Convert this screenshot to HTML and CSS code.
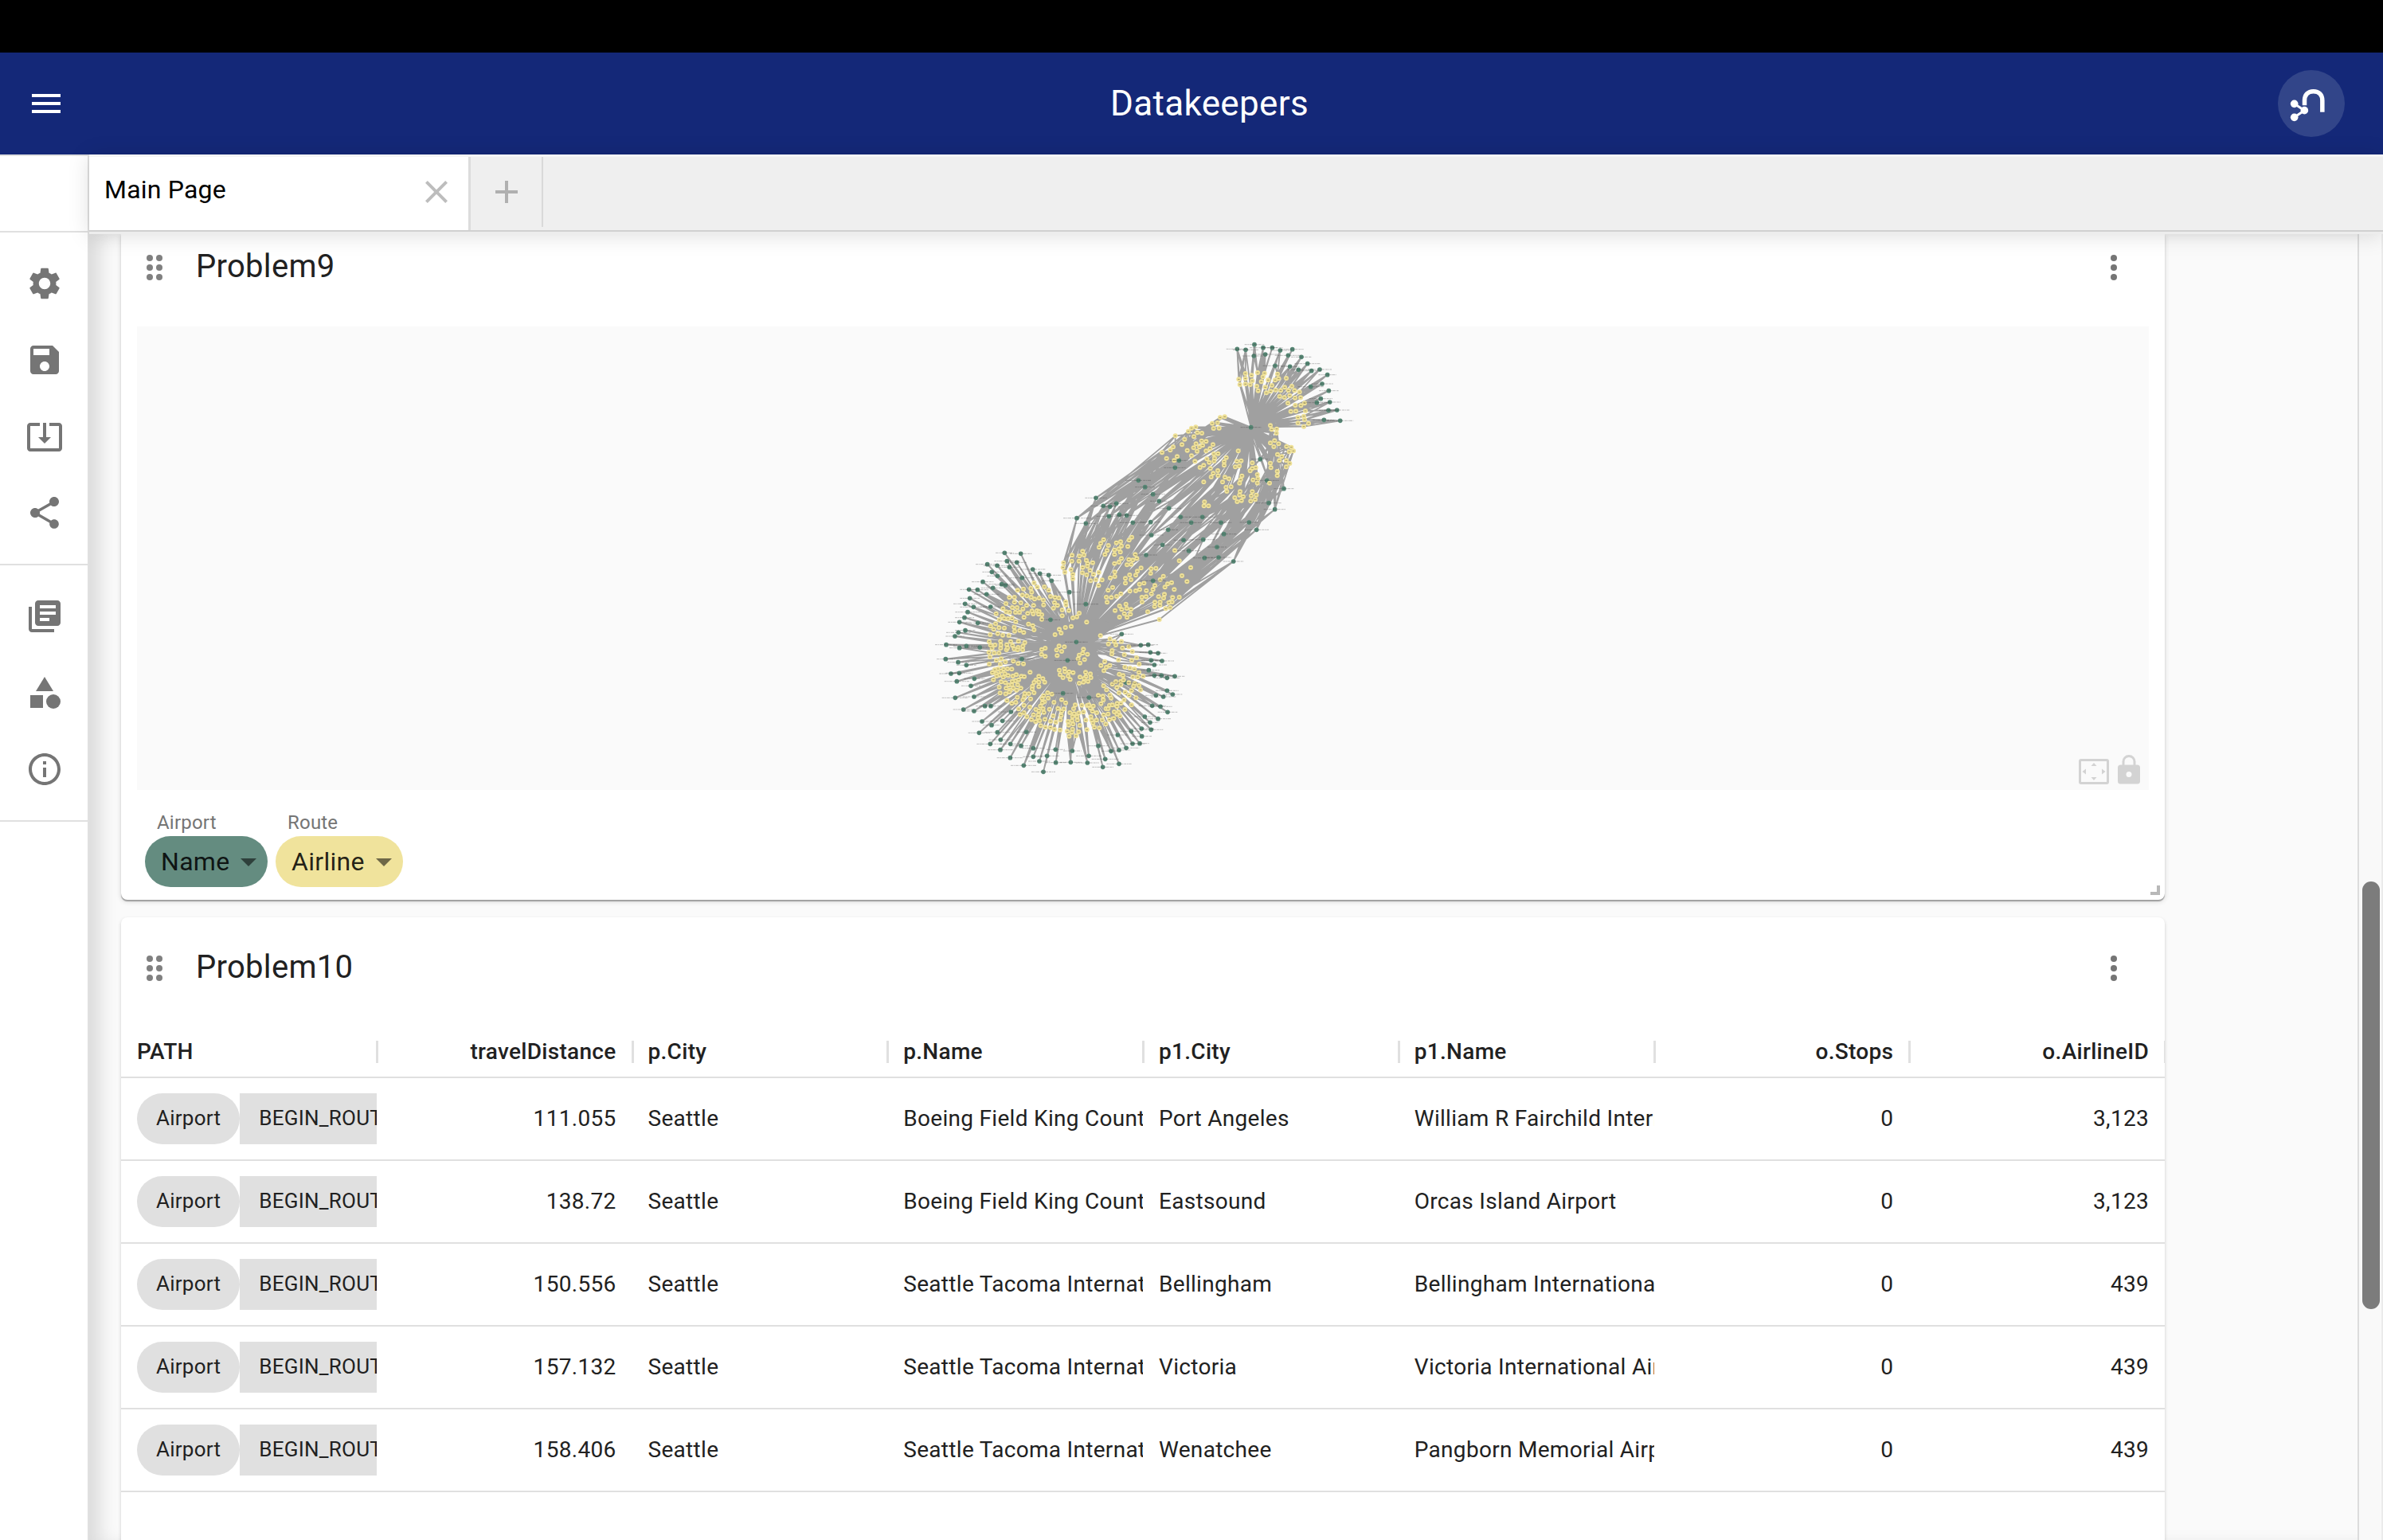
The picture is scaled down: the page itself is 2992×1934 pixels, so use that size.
FILE: index.html
```html
<!DOCTYPE html>
<html lang="en">
<head>
<meta charset="utf-8">
<title>Datakeepers</title>
<link rel="stylesheet" href="styles.css">
</head>
<body>
<div class="app">
  <div class="bezel"></div>
  <header class="topbar">
    <svg class="icon menu" viewBox="0 0 24 24"><path d="M3 18h18v-2H3v2zm0-5h18v-2H3v2zm0-7v2h18V6H3z"/></svg>
    <h1 class="brand">Datakeepers</h1>
    <div class="avatar">
      <svg viewBox="1080 114 252 252"><g fill="none" stroke="#fff"><path stroke-width="16.5" d="M1180.500 247V229c0-22 13-35 33.500-35s33.500 13 33.500 35v43"/><path stroke-width="9" d="M1142 241l38 25l-38 26"/></g><g fill="#fff"><circle cx="1142" cy="241" r="14.500"/><circle cx="1180" cy="266" r="14.500"/><circle cx="1142" cy="292" r="14.500"/></g></svg>
    </div>
  </header>
  <div class="body">
    <nav class="drawer">
      <div class="drawer-head"></div>
      <div class="group">
        <div class="item"><svg class="icon" viewBox="0 0 24 24"><path d="M19.140 12.940c.04-.3.06-.61.06-.94 0-.32-.02-.64-.07-.94l2.030-1.580c.18-.14.23-.41.12-.61l-1.920-3.320c-.12-.22-.37-.29-.59-.22l-2.390.96c-.5-.38-1.030-.7-1.620-.94l-.36-2.540c-.04-.24-.24-.41-.48-.41h-3.840c-.24 0-.43.17-.47.41l-.36 2.540c-.59.24-1.130.57-1.620.94l-2.390-.96c-.22-.08-.47 0-.59.22L2.740 8.870c-.12.21-.08.47.12.61l2.030 1.580c-.05.3-.09.63-.09.94s.02.64.07.94l-2.030 1.580c-.18.14-.23.41-.12.61l1.920 3.320c.12.22.37.29.59.22l2.390-.96c.5.38 1.030.7 1.620.94l.36 2.540c.05.24.24.41.48.41h3.840c.24 0 .44-.17.47-.41l.36-2.540c.59-.24 1.130-.56 1.620-.94l2.390.96c.22.08.47 0 .59-.22l1.920-3.320c.12-.22.07-.47-.12-.61l-2.010-1.580zM12 15.600c-1.980 0-3.600-1.620-3.600-3.600s1.620-3.600 3.600-3.600 3.600 1.620 3.600 3.600-1.620 3.600-3.600 3.600z"/></svg></div>
        <div class="item"><svg class="icon" viewBox="0 0 24 24"><path d="M17 3H5c-1.110 0-2 .9-2 2v14c0 1.100.89 2 2 2h14c1.100 0 2-.9 2-2V7l-4-4zm-5 16c-1.660 0-3-1.340-3-3s1.340-3 3-3 3 1.340 3 3-1.340 3-3 3zm3-10H5V5h10v4z"/></svg></div>
        <div class="item"><svg class="icon" viewBox="0 0 24 24"><path d="M12 16.500l4-4h-3v-9h-2v9H8l4 4zm9-13h-6v1.990h6v14.030H3V5.490h6V3.500H3c-1.100 0-2 .9-2 2v14c0 1.100.9 2 2 2h18c1.100 0 2-.9 2-2v-14c0-1.100-.9-2-2-2z"/></svg></div>
        <div class="item"><svg class="icon" viewBox="0 0 24 24"><path d="M18 16.080c-.76 0-1.440.3-1.960.77L8.910 12.700c.05-.23.09-.46.09-.7s-.04-.47-.09-.7l7.050-4.110c.54.5 1.250.81 2.040.81 1.660 0 3-1.340 3-3s-1.340-3-3-3-3 1.340-3 3c0 .24.04.47.09.7L8.040 9.810C7.500 9.310 6.790 9 6 9c-1.660 0-3 1.340-3 3s1.340 3 3 3c.79 0 1.500-.31 2.040-.81l7.120 4.160c-.05.21-.08.43-.08.65 0 1.610 1.310 2.920 2.920 2.920s2.920-1.310 2.920-2.920-1.310-2.920-2.920-2.920z"/></svg></div>
      </div>
      <div class="group">
        <div class="item"><svg class="icon" viewBox="0 0 24 24"><path d="M4 6H2v14c0 1.100.9 2 2 2h14v-2H4V6zm16-4H8c-1.100 0-2 .9-2 2v12c0 1.100.9 2 2 2h12c1.100 0 2-.9 2-2V4c0-1.100-.9-2-2-2zm-1 5H9V5h10v2zm0 4H9V9h10v2zm-4 4H9v-2h6v2z"/></svg></div>
        <div class="item"><svg class="icon" viewBox="0 0 24 24"><path d="M12 2l-5.500 9h11z"/><circle cx="17.500" cy="17.500" r="4.500"/><path d="M3 13.500h8v8H3z"/></svg></div>
        <div class="item"><svg class="icon" viewBox="0 0 24 24"><path d="M11 7h2v2h-2zm0 4h2v6h-2zm1-9C6.480 2 2 6.480 2 12s4.480 10 10 10 10-4.480 10-10S17.520 2 12 2zm0 18c-4.410 0-8-3.590-8-8s3.590-8 8-8 8 3.590 8 8-3.590 8-8 8z"/></svg></div>
      </div>
    </nav>
    <div class="main">
      <div class="tabs">
        <div class="tab"><span>Main Page</span><svg class="icon close" viewBox="0 0 24 24"><path d="M19 6.410L17.590 5 12 10.590 6.410 5 5 6.410 10.590 12 5 17.590 6.410 19 12 13.410 17.590 19 19 17.590 13.410 12z"/></svg></div>
        <div class="tab-add"><svg class="icon" viewBox="0 0 24 24"><path d="M19 13h-6v6h-2v-6H5v-2h6V5h2v6h6v2z"/></svg></div>
      </div>
      <div class="page">
        <div class="cards">
          <section class="card card-graph">
            <div class="card-head">
              <svg class="grip" viewBox="0 0 20 32"><circle cx="4" cy="4" r="4"/><circle cx="16" cy="4" r="4"/><circle cx="4" cy="16" r="4"/><circle cx="16" cy="16" r="4"/><circle cx="4" cy="28" r="4"/><circle cx="16" cy="28" r="4"/></svg>
              <h2>Problem9</h2>
              <svg class="more" viewBox="0 0 8 32"><circle cx="4" cy="4" r="4"/><circle cx="4" cy="16" r="4"/><circle cx="4" cy="28" r="4"/></svg>
            </div>
            <div class="canvas">
              <svg id="graph" viewBox="-3384 0 7578 1746"></svg>
              <div class="canvas-tools">
                <svg class="fit" viewBox="0 0 38 32"><rect x="1.500" y="1.500" width="35" height="29" rx="1.500" fill="none" stroke="#d3d3d3" stroke-width="3"/><path d="M15.500 9h7L19 5zM15.500 23h7L19 27zM9 12.500v7L4.500 16zM29 12.500v7l4.500-3.500z"/></svg>
                <svg class="lock" viewBox="0 0 28 37"><path fill="none" stroke="#d3d3d3" stroke-width="3" d="M7 14V8.500a7 7 0 0 1 14 0V14"/><path fill-rule="evenodd" d="M3.500 12.500h21A3.500 3.500 0 0 1 28 16v17a3.500 3.500 0 0 1-3.500 3.500h-21A3.500 3.500 0 0 1 0 33V16a3.500 3.500 0 0 1 3.500-3.500zM14 21a3.500 3.500 0 1 0 0 7 3.500 3.500 0 0 0 0-7z"/></svg>
              </div>
            </div>
            <div class="legend">
              <div class="legend-item"><label>Airport</label><div class="pill pill-airport">Name<i class="caret"></i></div></div>
              <div class="legend-item"><label>Route</label><div class="pill pill-route">Airline<i class="caret"></i></div></div>
            </div>
            <i class="resize"></i>
          </section>
          <section class="card card-table">
            <div class="card-head">
              <svg class="grip" viewBox="0 0 20 32"><circle cx="4" cy="4" r="4"/><circle cx="16" cy="4" r="4"/><circle cx="4" cy="16" r="4"/><circle cx="16" cy="16" r="4"/><circle cx="4" cy="28" r="4"/><circle cx="16" cy="28" r="4"/></svg>
              <h2>Problem10</h2>
              <svg class="more" viewBox="0 0 8 32"><circle cx="4" cy="4" r="4"/><circle cx="4" cy="16" r="4"/><circle cx="4" cy="28" r="4"/></svg>
            </div>
            <div class="grid">
              <div class="row head"><div class="cell">PATH</div><div class="cell num">travelDistance</div><div class="cell">p.City</div><div class="cell">p.Name</div><div class="cell">p1.City</div><div class="cell">p1.Name</div><div class="cell num">o.Stops</div><div class="cell num">o.AirlineID</div></div>
              <div class="row"><div class="cell path"><span class="chip">Airport</span><span class="chip rel">BEGIN_ROUTE</span></div><div class="cell num">111.055</div><div class="cell">Seattle</div><div class="cell">Boeing Field King County</div><div class="cell">Port Angeles</div><div class="cell">William R Fairchild International</div><div class="cell num">0</div><div class="cell num">3,123</div></div>
              <div class="row"><div class="cell path"><span class="chip">Airport</span><span class="chip rel">BEGIN_ROUTE</span></div><div class="cell num">138.72</div><div class="cell">Seattle</div><div class="cell">Boeing Field King County</div><div class="cell">Eastsound</div><div class="cell">Orcas Island Airport</div><div class="cell num">0</div><div class="cell num">3,123</div></div>
              <div class="row"><div class="cell path"><span class="chip">Airport</span><span class="chip rel">BEGIN_ROUTE</span></div><div class="cell num">150.556</div><div class="cell">Seattle</div><div class="cell">Seattle Tacoma International</div><div class="cell">Bellingham</div><div class="cell">Bellingham International</div><div class="cell num">0</div><div class="cell num">439</div></div>
              <div class="row"><div class="cell path"><span class="chip">Airport</span><span class="chip rel">BEGIN_ROUTE</span></div><div class="cell num">157.132</div><div class="cell">Seattle</div><div class="cell">Seattle Tacoma International</div><div class="cell">Victoria</div><div class="cell">Victoria International Airport</div><div class="cell num">0</div><div class="cell num">439</div></div>
              <div class="row"><div class="cell path"><span class="chip">Airport</span><span class="chip rel">BEGIN_ROUTE</span></div><div class="cell num">158.406</div><div class="cell">Seattle</div><div class="cell">Seattle Tacoma International</div><div class="cell">Wenatchee</div><div class="cell">Pangborn Memorial Airport</div><div class="cell num">0</div><div class="cell num">439</div></div>
            </div>
          </section>
        </div>
        <div class="scrollbar"><div class="thumb"></div></div>
      </div>
    </div>
  </div>
</div>
<script src="graph.js"></script>
</body>
</html>
```
FILE: styles.css
```css
* { box-sizing: border-box; }
body { margin: 0; font-family: Roboto, "Liberation Sans", sans-serif; color: #212121; background: #fafafa; }
h1, h2 { margin: 0; font-weight: 400; }
svg { display: block; flex: none; }
.app { width: 2992px; height: 1934px; overflow: hidden; display: flex; flex-direction: column; }
.icon { width: 48px; height: 48px; fill: #757575; }

.bezel { height: 66px; background: #000; flex: none; }
.topbar { height: 128px; flex: none; background: #142878; color: #fff; display: flex; align-items: center; padding: 0 48px 0 34px; }
.menu { fill: #fff; }
.brand { flex: 1; text-align: center; font-size: 44px; line-height: 60px; letter-spacing: .33px; padding-left: 95px; padding-bottom: 1px; }
.avatar { width: 84px; height: 84px; border-radius: 50%; background: #324589; }

.body { flex: 1; min-height: 0; display: flex; }
.drawer { width: 112px; flex: none; background: #fff; border-right: 2px solid #e0e0e0; }
.drawer-head { height: 98px; border-top: 2px solid #e0e0e0; border-bottom: 2px solid #e0e0e0; }
.group { padding: 16px 0; border-bottom: 2px solid #e0e0e0; }
.item { height: 96px; display: flex; align-items: center; justify-content: center; padding-left: 2px; }

.main { flex: 1; min-width: 0; display: flex; flex-direction: column; background: #fafafa; }
.tabs { height: 100px; flex: none; display: flex; background: #efefef; border-top: 3px solid #f5f5f5; border-bottom: 3px solid #ededed; box-shadow: inset 0 -2px #d0d0d0, 0 2px 26px rgba(0,0,0,.13); position: relative; z-index: 1; }
.tab { width: 479px; height: 92px; background: #fff; border-right: 3px solid #dcdcdc; display: flex; align-items: center; justify-content: space-between; padding: 0 16px 4px 19px; font-size: 32px; letter-spacing: .2px; color: #000; }
.tab span { padding-bottom: 6px; }
.tab-add { width: 91px; height: 88px; border-right: 2px solid #d9d9d9; display: flex; align-items: center; justify-content: center; }
.close { fill: #bdbdbd; }
.tab-add .icon { fill: #b0b0b0; }

.page { flex: 1; min-height: 0; display: flex; justify-content: space-between; overflow: hidden; box-shadow: inset 22px 0 22px -8px rgba(0,0,0,.12); }
.cards { width: 2606px; padding-left: 40px; display: flex; flex-direction: column; gap: 22px; }
.card { flex: none; background: #fff; display: flex; flex-direction: column; position: relative; }
.card-graph { height: 836px; border-radius: 0 0 8px 8px; padding: 0 20px; box-shadow: 0 2px 1px #a0a0a0, 0 2px 6px rgba(0,0,0,.16); }
.card-table { height: 860px; border-radius: 8px; box-shadow: 0 2px 4px rgba(0,0,0,.18); }
.card-head { display: flex; align-items: center; height: 128px; flex: none; padding: 0 60px 0 32px; }
.card-graph .card-head { height: 116px; padding: 0 40px 32px 12px; }
.card-head h2 { flex: 1; padding-left: 42px; font-size: 40px; line-height: 54px; letter-spacing: .3px; padding-bottom: 2px; }
.grip { width: 20px; height: 32px; fill: #808080; }
.more { width: 8px; height: 32px; fill: #757575; }

.canvas { height: 582px; flex: none; background: #fafafa; position: relative; }
#graph { width: 2526px; height: 582px; }
.canvas-tools { position: absolute; right: 11px; bottom: 7px; display: flex; align-items: flex-end; gap: 11px; }
.canvas-tools svg { fill: #d3d3d3; }
.fit { width: 38px; height: 32px; }
.lock { width: 28px; height: 37px; }
.legend { display: flex; gap: 10px; padding: 24px 10px 0; }
.legend-item { display: flex; flex-direction: column; }
.legend label { padding-left: 15px; font-size: 24px; line-height: 34px; color: #757575; letter-spacing: .2px; }
.pill { height: 64px; border-radius: 32px; display: flex; align-items: center; justify-content: space-between; padding: 0 14px 1px 20px; font-size: 32px; color: rgba(0,0,0,.87); letter-spacing: .3px; }
.pill-airport { width: 154px; background: #648c80; }
.pill-route { width: 160px; background: #f0e39c; }
.caret { border: 10px solid transparent; border-top-color: rgba(0,0,0,.54); border-bottom: 0; margin-top: 3px; }
.resize { position: absolute; right: 6px; bottom: 6px; width: 12px; height: 12px; border-right: 4px solid #b8b8b8; border-bottom: 4px solid #b8b8b8; }

.grid { padding-top: 8px; }
.row { display: grid; grid-template-columns: repeat(8, 320.75px); height: 104px; border-bottom: 2px solid #e0e0e0; }
.cell { display: flex; align-items: center; padding: 0 20px 2px; overflow: hidden; white-space: nowrap; font-size: 28px; letter-spacing: .3px; }
.path { padding-bottom: 0; }
.num { justify-content: flex-end; }
.head { height: 66px; overflow: hidden; }
.head .cell { font-weight: 500; position: relative; overflow: visible; padding-bottom: 0; }
.head .cell::after { content: ""; position: absolute; right: -2px; top: 19px; width: 3px; height: 28px; background: #e0e0e0; }
.chip { flex: none; height: 64px; border-radius: 32px; padding: 0 24px; background: #e0e0e0; font-size: 26px; line-height: 63px; letter-spacing: .25px; }
.rel { border-radius: 0; }

.scrollbar { width: 32px; border-left: 2px solid #dcdcdc; border-right: 2px solid #ebebeb; background: #f9f9f9; padding: 813px 2px 0 4px; }
.thumb { width: 22px; height: 537px; border-radius: 11px; background: #7c7c7c; }
```
FILE: graph.js
```js
const parse = (s, dx = 0, dy = 0) => s.trim().split(/\s+/).map(p => {
  const [x, y] = p.split(',').map(Number);
  return [x + dx, y + dy];
});

// Node positions, grouped by cluster
const fanAirports = parse(`334,103 395,106 343,134 380,139 269,146 306,151 352,157 440,165 286,175 467,181 500,187 307,190 400,197 511,208 252,212 323,221 337,225 290,235 200,241 232,242 266,259 203,274 185,295 217,307 281,306 195,326 183,347 164,364 233,367 186,395 160,403 147,417 114,449 190,454 164,461 241,459 112,503 159,515 399,503 190,526 132,558 163,556 220,577 154,587 207,604 219,645 148,649 179,693 219,699 260,680 282,680 358,702 249,738 326,736 285,752 238,781 307,779 416,778 319,807 280,823 356,823 318,845 396,830 442,839 355,875 442,871 494,868 526,844 465,888 406,904 527,893 480,928 589,849 583,892 651,868 687,830 646,894 713,880 704,910 765,898 735,850 765,846 792,838 760,789 816,822 843,821 811,775 850,765 851,794 886,769 882,742 862,720 912,728 948,703 921,682 890,679 904,640 932,645 967,636 946,622 946,574 975,568 925,565 898,565 877,545 898,525 886,508 927,510 912,481 883,478 847,451 875,449 775,409 791,592`, -450, 750);
const innerAirports = parse(`578,251 640,296 507,355 604,439 571,508 554,632 652,648`, -450, 750);
const fanRoutes = parse(`445,216 405,239 383,244 433,236 457,232 484,231 500,244 401,262 418,265 436,251 371,270 352,271 434,270 447,277 464,273 480,281 507,267 524,271 538,273 481,299 522,290 533,301 518,311 564,287 565,299 551,318 576,320 551,340 339,294 328,313 371,289 395,291 417,301 443,301 363,309 381,309 403,314 375,327 390,327 353,327 340,325 421,331 437,322 442,333 456,321 464,324 474,336 474,353 462,334 302,332 325,341 314,355 333,350 347,351 362,349 376,362 407,346 281,379 293,391 300,370 313,385 333,386 370,383 372,398 391,395 406,403 424,371 440,377 445,393 280,411 308,407 327,413 350,414
276,437 281,451 287,462 298,450 319,436 320,450 319,462 342,449 341,468 357,437 364,452 370,465 386,436 385,459 383,468 403,454 410,441 402,468 345,461 275,478 279,495 295,480 313,480 321,502 303,508 276,522 318,522 337,514 367,511 345,540 385,520 405,521 361,541 330,541 320,548 309,540 297,543 288,554 303,558 313,563 335,558 304,567 329,571 365,567 347,565 292,581 321,589 314,609 337,592 350,601 361,600 340,613 355,620 378,562 397,568 375,585 387,581 408,569 430,553 363,587 383,600 317,631 338,634 352,627 367,612 379,620 395,613 343,659 361,670 376,666 382,647 403,657 410,633 425,634 408,645 387,691 407,677 392,712 407,705 463,568 452,582 463,590 478,577 485,590 445,591 439,605 463,607 438,616 445,630 496,630 512,635 481,641 475,652 484,664 498,650 432,653 476,668 429,684 452,693 469,680 463,698 479,690 503,692 520,666 549,656 564,668 535,689 557,691 549,700 462,712 443,713 482,704 418,720 435,731 451,739 460,724 466,735 486,730 507,737 517,717 527,741 544,732 547,716 470,754 488,760 507,761 522,768 543,770 600,676 594,690 580,705 596,709 613,706 590,720 607,720 573,738 588,735 608,733 575,752 592,748 570,775 590,767 613,777 603,792 577,794 617,753 587,779 644,769 631,703 625,677 645,678 651,676 657,688 668,680 665,700 681,705 640,733 659,720 662,733 667,744 680,733 672,760 691,763 715,748 702,733 707,713 724,710 729,731 745,727 716,690 697,671 704,643 706,657 729,677 724,690 740,676 747,702 757,682 763,703 769,718 757,711 787,693 812,676 772,670 758,670 735,650 687,640 731,639 718,619 707,604 740,598 753,588 772,587 782,582 757,610 772,600 765,630 788,628 784,657 803,640 812,622 829,649 846,619 840,603 820,605 824,595 802,592 766,560 780,565 787,533 806,537 817,570 823,541 840,553 835,571 856,568 841,522 763,506 785,487 813,508 815,475 831,498 802,457 774,437 778,461 753,450 747,437 731,427 725,446 739,471 738,484`, -450, 750);
const coreRoutes = parse(`591,348 606,344 615,330 643,364 540,391 563,384 585,380 547,405 524,411 695,415 711,512 697,527 717,534 730,527 708,547 530,469 539,454 532,490 549,474 559,457 474,467 487,462 473,485 487,493 631,466 628,481 646,485 635,505 618,518 611,502 615,488 540,545 560,539 561,551 543,562 554,573 577,551 592,554 581,580 573,567 639,553 657,559 640,569 618,571 634,576 659,573 648,587 615,594 631,590`, -450, 750);
const lowerRoutes = parse(`363,794 353,805 348,829 321,811 305,815 324,827 314,838 298,842 320,850 298,859 257,803 246,817 240,832 275,825 270,844 262,859 178,847 138,862 166,865 183,861 164,884 137,884 192,881 197,893 216,890 106,890 104,908 111,926 134,916 141,934 141,950 178,908 177,928 196,903 206,919 193,936 219,934 239,926 208,958 228,954 251,955 238,976 376,859 382,874 367,880 352,878 324,874 315,888 298,893 361,896 345,898 299,925 299,942 282,947 398,910 384,922 378,937 355,936 339,949 360,954 339,967 436,913 454,911 434,930 291,983 274,994 356,997 378,996 393,991 392,971 409,967 418,995 322,1007 306,1017 286,1021 267,1020 270,1039 443,991 450,976 470,954 482,941 437,1007 401,1020 417,1018 402,1038 464,1018 486,1009 483,1023 470,1038 450,1039 449,1055 469,1051 498,970 513,965 488,982 523,991 517,1021 542,1020 515,1038 503,1040 508,1059 491,1063 423,1075 317,1053 341,1046 325,1066 344,1062 360,1066 300,1070 335,1082 358,1084 317,1095 345,1096 467,1104 525,844 542,883 585,908 552,939 571,961`);
const bridgeAirports = parse(`541,505 526,532 388,580 413,605 443,632 466,658 228,646 256,676 281,679 305,667 156,722 190,742 277,715 316,709 344,712 367,739 434,737 503,685 547,718 587,739 629,718 500,766 437,786 479,823 417,861 443,958 558,805 578,845 632,803 699,739 710,782 684,831 637,872 690,870 746,885 833,766 805,738 902,689 879,665 936,611 872,580 847,500`);
const upperRoutes = parse(`713,340 696,343 686,363 666,365 671,384 692,383 604,379 588,383 576,395 597,415 610,400 627,402 527,412 562,425 552,445 519,454 508,466 477,475 494,497 572,467 534,490 523,505 588,487 601,508 609,470 596,457 605,442 618,454 626,431 643,433 630,448 658,460 643,469 669,445 672,480 688,479 675,496 646,499 655,512 673,507 620,531 634,523 659,535 687,543 670,553 688,562 662,567 634,586 719,494 711,509 711,523 764,469 759,508 775,506 753,529 768,526 714,568 729,574 705,586 718,606 737,604 721,621 778,563 773,577 769,590 771,622 769,635 751,645 783,641 760,660 776,656 637,661 635,676 652,676 817,514 817,535 830,532 809,544 836,558 838,573 820,578 836,590 817,622 832,635 813,638 828,652 811,658 885,373 890,388 909,386 908,402 901,430 885,439 916,442 898,453 946,452 964,455 972,469 956,472 912,482 928,490 919,505 945,505 958,516 945,529 885,515 887,532 911,546 911,562 882,590`);
const topRoutes = parse(`791,177 766,199 791,196 770,219 791,217 814,184 817,205 809,219 837,174 863,176 857,190 851,208 834,225 839,242 866,229 870,250 877,202 891,222 886,244 912,179 916,196 903,202 905,239 945,195 939,229 924,241 920,263 938,267 958,260 953,241 966,225 976,241 995,247 978,269 999,268 951,289 979,297 1000,298 1014,289 962,320 981,319 1017,318 989,343 1011,338 1014,351 989,364 1029,365 1011,377`);
const topAirports = parse(`760,85 792,88 825,68 823,111 858,80 892,80 866,105 922,90 968,86 952,109 1002,115 903,148 959,151 991,163 1025,140 1040,167 1071,162 1100,182 1080,216 1037,227 1105,242 1075,272 1060,287 1109,285 1136,315 1104,316 1087,352 1148,355`);

const topHub = [812, 380], mainHub = [154, 1189], southHub = [121, 1258], fanCentre = [138, 1222];

// Edges
let edges = '';
const link = (a, b) => { edges += `M${a[0]} ${a[1]}L${b[0]} ${b[1]}`; };
const angleGap = (c, a, b) => {
  const d = Math.abs(Math.atan2(a[1] - c[1], a[0] - c[0]) - Math.atan2(b[1] - c[1], b[0] - c[0]));
  return Math.min(d, 2 * Math.PI - d);
};
const nearest = (c, node, list, n) =>
  [...list].sort((p, q) => angleGap(c, node, p) - angleGap(c, node, q)).slice(0, n);
const connect = (c, airports, routes, perAirport, perRoute) => {
  airports.forEach(a => nearest(c, a, routes, perAirport).forEach(r => link(a, r)));
  routes.forEach(r => nearest(c, r, airports, perRoute).forEach(a => link(a, r)));
};

// Both sides of the bridge are swept around their hub and paired in sweep order
const sweep = (hub, other, list) => {
  const axis = Math.atan2(other[1] - hub[1], other[0] - hub[0]);
  const turn = p => {
    const t = Math.atan2(p[1] - hub[1], p[0] - hub[0]) - axis;
    return Math.atan2(Math.sin(t), Math.cos(t));
  };
  return [...list].sort((p, q) => turn(p) - turn(q));
};
const pair = (hub, other, airports, routes) => {
  const a = sweep(hub, other, airports), r = sweep(hub, other, routes);
  r.forEach((node, i) => {
    const k = i / (r.length - 1) * (a.length - 1);
    link(node, a[Math.floor(k)]);
    link(node, a[Math.ceil(k)]);
    if (i % 3 === 0) link(node, a[Math.min(a.length - 1, Math.ceil(k) + 1)]);
  });
};
connect(fanCentre, fanAirports, fanRoutes, 2, 1);
connect(topHub, topAirports, topRoutes, 4, 2);
pair(topHub, mainHub, bridgeAirports, upperRoutes);
pair(mainHub, topHub, bridgeAirports, lowerRoutes);
topRoutes.forEach(r => { link(r, topHub); link(r, [822, 368]); });
upperRoutes.forEach(r => { link(r, topHub); link(r, [806, 390]); });
fanRoutes.forEach((r, i) => {
  link(r, r[1] > 1270 ? southHub : mainHub);
  if (i % 3 === 0) link(r, fanCentre);
});
coreRoutes.forEach(r => { link(r, mainHub); link(r, southHub); });
lowerRoutes.forEach(r => link(r, mainHub));

// Captions under the airports are far below reading size, so they are drawn as hairlines
const airports = [...fanAirports, ...innerAirports, ...bridgeAirports, ...topAirports, topHub];
const routes = [...fanRoutes, ...coreRoutes, ...lowerRoutes, ...upperRoutes, ...topRoutes];
const captions = airports.map(([x, y], i) => {
  const w = 34 + (i * 7) % 18;
  return `M${x - w} ${y}H${x + w}`;
}).join('');

document.getElementById('graph').innerHTML =
  `<path d="${edges}" fill="none" stroke="#a0a0a0" stroke-width="5.5"/>` +
  `<path d="M60 1175L130 1110L245 1100L300 1130L220 1190L240 1250L210 1330L90 1330L20 1260Z" fill="#a0a0a0"/>` +
  airports.map(([x, y]) => `<circle cx="${x}" cy="${y}" r="8.5" fill="#568674"/>`).join('') +
  routes.map(([x, y]) => `<circle cx="${x}" cy="${y}" r="9" fill="#efe198"/><path d="M${x - 4} ${y}h8" stroke="#a69c68" stroke-width="3"/>`).join('') +
  `<path d="${captions}" fill="none" stroke="#333" stroke-opacity=".45" stroke-width="2" stroke-dasharray="9 2 5 2 12 3"/>`;
```
